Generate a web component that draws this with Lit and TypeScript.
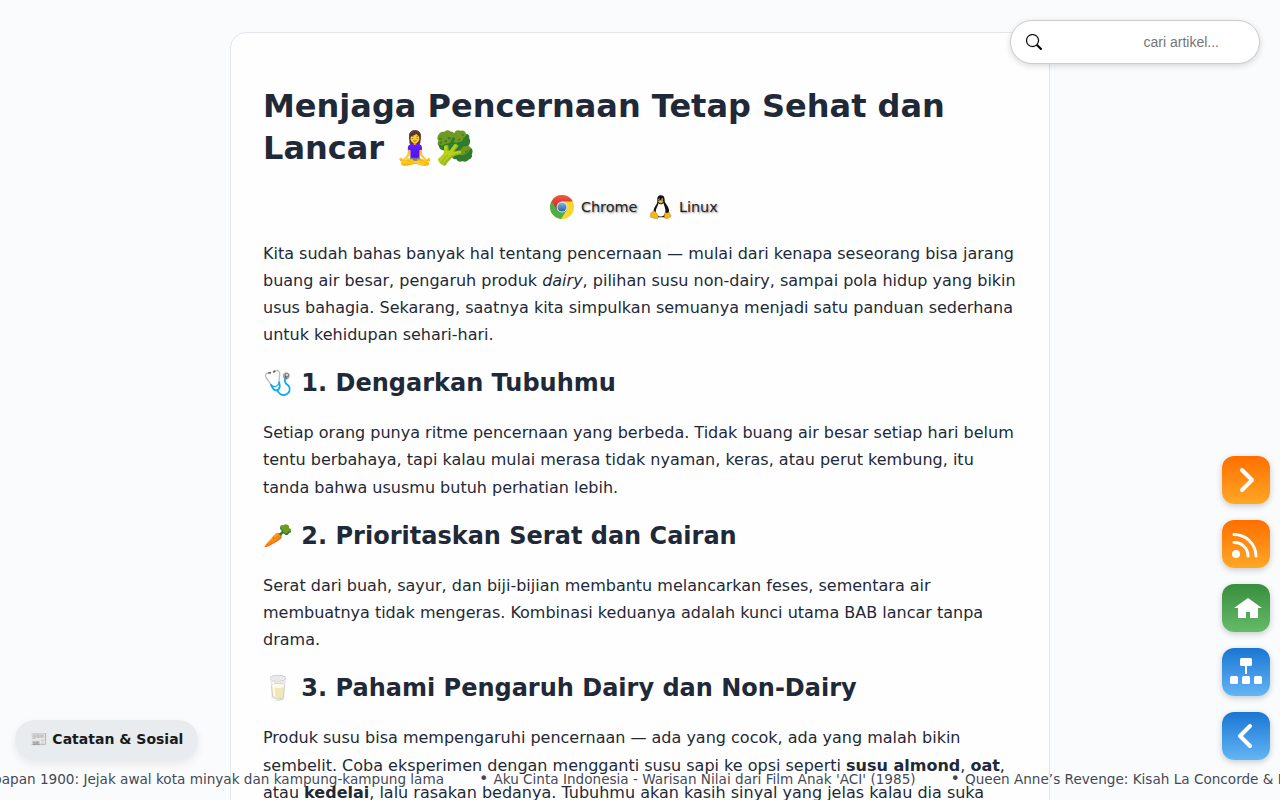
import { LitElement, html, css, svg } from "lit";
import { customElement } from "lit/decorators.js";

const chromeLogo = svg`<svg class="logo" viewBox="0 0 24 24">
  <defs>
    <linearGradient id="cr" x1="0" y1="0" x2="0" y2="1"><stop offset="0" stop-color="#ee5a4a"/><stop offset="1" stop-color="#cf1f1a"/></linearGradient>
    <linearGradient id="cb" x1="0" y1="0" x2="0" y2="1"><stop offset="0" stop-color="#86b8e8"/><stop offset="1" stop-color="#1f5fa8"/></linearGradient>
  </defs>
  <circle cx="12" cy="12" r="12" fill="#fbd42c"/>
  <path d="M12 12 1.6 6A12 12 0 0 0 11 23.95L17 14.8Z" fill="#4cae4a"/>
  <path d="M12 6.600H22.700A12 12 0 0 0 1.700 5.900L7 14.500Z" fill="url(#cr)"/>
  <circle cx="12" cy="12" r="5.400" fill="#e8ecea"/>
  <circle cx="12" cy="12" r="4.500" fill="url(#cb)"/>
</svg>`;

const tuxLogo = svg`<svg class="logo" viewBox="-1.2 0 24 24">
  <path d="M11.6.2C9 .2 8 2 8.100 4.400c.1 2.800.2 3.600-1.300 5.700C5.200 12.300 4.200 15 4.300 17.600L8 22.200h7.800l3.900-4.400c.6-3.400-.6-6.200-2.600-8.600-1.700-2.100-1.600-3-1.700-5C15.300 1.700 14 .2 11.600.2Z" fill="#111"/>
  <path d="M9.200 8.200c.8.900 1.600 1.200 2.500 1.100 1.200-.1 2-.7 2.600-1.300.2 1.800 1.400 3.700 1.800 6.300.4 3.200-.6 7.200-4.100 7.200-4.200 0-6.200-3.300-5.100-7.100.7-2.400 2.100-3.900 2.300-6.200Z" fill="#fff"/>
  <ellipse cx="10" cy="4.600" rx=".8" ry="1.200" fill="#ccc"/><ellipse cx="12.900" cy="4.600" rx="1" ry="1.300" fill="#ccc"/>
  <circle cx="10.300" cy="4.900" r=".55"/><circle cx="12.700" cy="4.900" r=".6"/>
  <path d="M8.900 6.500c.9-.9 1.600-1.200 2.400-1.200s2 .5 3 1.100c-.7 1.100-1.800 1.800-2.900 1.800-1.200 0-1.900-.8-2.500-1.700Z" fill="#f3b61c"/>
  <path d="M4.700 16.100c1.500 0 2.600 2.300 3.800 3.900 1.500 2.100.5 3.900-1.500 3.800-1.700-.1-3-1.100-4.900-1.300-1.800-.2-.9-1.500-.8-2.500.1-1.300-.2-1.900.6-2.200 1.100-.2 1.500-1.700 2.800-1.700Z" fill="#f3b61c" stroke="#a87608" stroke-width=".4"/>
  <path d="M16.100 17c.4 1.300 2.600 1.600 3.500.1 1.400.2.700 1.900 1.700 2.800.9.900 1.100 1.400-.3 2.100-1.500.8-2.200 1.900-3.700 2-1.900.100-2.400-1.400-2.100-3.100.3-1.400.2-2.700.9-3.900Z" fill="#f3b61c" stroke="#a87608" stroke-width=".4"/>
</svg>`;

const chevronRight = svg`<svg viewBox="0 0 48 48"><path d="M20 14 30 24 20 34" class="line" stroke-width="4"/></svg>`;
const chevronLeft = svg`<svg viewBox="0 0 48 48"><path d="M28 14 18 24 28 34" class="line" stroke-width="4"/></svg>`;
const feed = svg`<svg viewBox="0 0 48 48"><circle cx="14" cy="34" r="4" fill="#fff"/>
  <path d="M12 22.500A13.500 13.500 0 0 1 26 36M12 14.500A22 22 0 0 1 34 36" class="line" stroke-width="3"/></svg>`;
const home = svg`<svg viewBox="0 0 48 48"><path d="M26 14 12 24H16V34H24V28H28V34H36V24H40Z" fill="#fff"/></svg>`;
const sitemap = svg`<svg viewBox="0 0 48 48" fill="#fff"><rect x="18" y="10" width="12" height="8" rx="1.500"/><rect x="23" y="18" width="2" height="8"/>
  <rect x="8" y="28" width="8" height="8" rx="1.500"/><rect x="20" y="28" width="8" height="8" rx="1.500"/><rect x="32" y="28" width="8" height="8" rx="1.500"/></svg>`;

const headlines = [
  "Balikpapan 1900: Jejak awal kota minyak dan kampung-kampung lama",
  "Aku Cinta Indonesia - Warisan Nilai dari Film Anak 'ACI' (1985)",
  "Queen Anne’s Revenge: Kisah La Concorde & Blackbeard",
];

@customElement("app-root")
export class AppRoot extends LitElement {
  static styles = css`
    :host {
      display: block;
      position: relative;
      height: 100vh;
      overflow: hidden;
      background: #f9fbfd;
      color: #1f2937;
      font: 16px/1.7 "DejaVu Sans", sans-serif;
    }
    * { box-sizing: border-box; }
    .article {
      width: 820px;
      margin: 32px auto 0;
      padding: 32px;
      background: #fefefe;
      border: 1px solid #e2e6ea;
      border-radius: 16px;
    }
    h1 { font-size: 32px; line-height: 1.3; margin: 21.44px 0; }
    h2 { font-size: 24px; line-height: 1.3; margin: 19.92px 0; }
    p { margin: 0 0 16px; }
    .agents {
      display: flex;
      justify-content: center;
      align-items: center;
      gap: 11px;
      height: 32px;
      margin-bottom: 16.44px;
      padding-right: 12px;
      font-size: 14.4px;
      color: #222;
      text-shadow: 1px 1px 2px rgba(0, 0, 0, 0.5);
    }
    .agent { display: flex; align-items: center; gap: 6.6px; }
    .logo { width: 24px; height: 24px; display: block; }
    .search {
      position: absolute;
      top: 20px;
      right: 20px;
      width: 250px;
      height: 44px;
      display: flex;
      align-items: center;
      justify-content: space-between;
      padding: 0 40px 0 15px;
      background: #fff;
      border: 1px solid #ccc;
      border-radius: 22px;
      box-shadow: 0 2px 6px rgba(0, 0, 0, 0.15);
      font: 14px "Liberation Sans", sans-serif;
      color: #757575;
    }
    .search svg { width: 16px; height: 16px; }
    .rail {
      position: absolute;
      right: 10px;
      bottom: 40px;
      display: grid;
      gap: 16px;
    }
    .tile {
      width: 48px;
      height: 48px;
      border-radius: 12px;
      box-shadow: 0 2px 6px rgba(0, 0, 0, 0.2);
    }
    .tile svg { display: block; width: 48px; height: 48px; }
    .line { fill: none; stroke: #fff; stroke-linecap: round; stroke-linejoin: round; }
    .orange { background: linear-gradient(#ff6f00, #ffa726); }
    .green { background: linear-gradient(#388e3c, #66bb6a); }
    .blue { background: linear-gradient(#1976d2, #64b5f6); }
    .notes {
      position: absolute;
      left: 15px;
      bottom: 40px;
      height: 40px;
      padding: 0 15px;
      border-radius: 20px;
      background: #e8ecef;
      box-shadow: 0 4px 10px rgba(0, 0, 0, 0.08);
      font-size: 14px;
      font-weight: 700;
      line-height: 38px;
      color: #1a1a1a;
      white-space: nowrap;
    }
    .paper { margin-right: 0.5px; }
    .ticker {
      position: absolute;
      left: -54.4px;
      bottom: 8px;
      display: flex;
      gap: 35px;
      font-size: 13.6px;
      line-height: 26px;
      white-space: nowrap;
      color: #1f2937;
      opacity: 0.85;
    }
    .dot { font-size: 16px; line-height: 1; margin-right: 0.6px; }
  `;

  render() {
    return html`
      <main class="article">
        <h1>Menjaga Pencernaan Tetap Sehat dan Lancar 🧘‍♀️🥦</h1>
        <div class="agents">
          <span class="agent">${chromeLogo}Chrome</span>
          <span class="agent">${tuxLogo}Linux</span>
        </div>
        <p>Kita sudah bahas banyak hal tentang pencernaan — mulai dari kenapa seseorang bisa jarang buang air besar, pengaruh produk <em>dairy</em>, pilihan susu non-dairy, sampai pola hidup yang bikin usus bahagia. Sekarang, saatnya kita simpulkan semuanya menjadi satu panduan sederhana untuk kehidupan sehari-hari.</p>
        <h2>🩺 1. Dengarkan Tubuhmu</h2>
        <p>Setiap orang punya ritme pencernaan yang berbeda. Tidak buang air besar setiap hari belum tentu berbahaya, tapi kalau mulai merasa tidak nyaman, keras, atau perut kembung, itu tanda bahwa ususmu butuh perhatian lebih.</p>
        <h2>🥕 2. Prioritaskan Serat dan Cairan</h2>
        <p>Serat dari buah, sayur, dan biji-bijian membantu melancarkan feses, sementara air membuatnya tidak mengeras. Kombinasi keduanya adalah kunci utama BAB lancar tanpa drama.</p>
        <h2>🥛 3. Pahami Pengaruh Dairy dan Non-Dairy</h2>
        <p>Produk susu bisa mempengaruhi pencernaan — ada yang cocok, ada yang malah bikin sembelit. Coba eksperimen dengan mengganti susu sapi ke opsi seperti <strong>susu almond</strong>, <strong>oat</strong>, atau <strong>kedelai</strong>, lalu rasakan bedanya. Tubuhmu akan kasih sinyal yang jelas kalau dia suka</p>
      </main>
      <div class="search">
        <svg viewBox="0 0 16 16" fill="#000" stroke="#000" stroke-width=".2"><path d="M11.742 10.344a6.500 6.500 0 1 0-1.397 1.398h-.001c.03.040.062.078.098.115l3.850 3.850a1 1 0 0 0 1.415-1.414l-3.850-3.850a1.007 1.007 0 0 0-.115-.1zM12 6.500a5.500 5.500 0 1 1-11 0 5.500 5.500 0 0 1 11 0z"/></svg>
        <span>cari artikel...</span>
      </div>
      <div class="notes"><span class="paper">📰</span> Catatan &amp; Sosial</div>
      <div class="ticker">${headlines.map((t) => html`<span><span class="dot">•</span> ${t}</span>`)}</div>
      <nav class="rail">
        <div class="tile orange">${chevronRight}</div>
        <div class="tile orange">${feed}</div>
        <div class="tile green">${home}</div>
        <div class="tile blue">${sitemap}</div>
        <div class="tile blue">${chevronLeft}</div>
      </nav>
    `;
  }
}
